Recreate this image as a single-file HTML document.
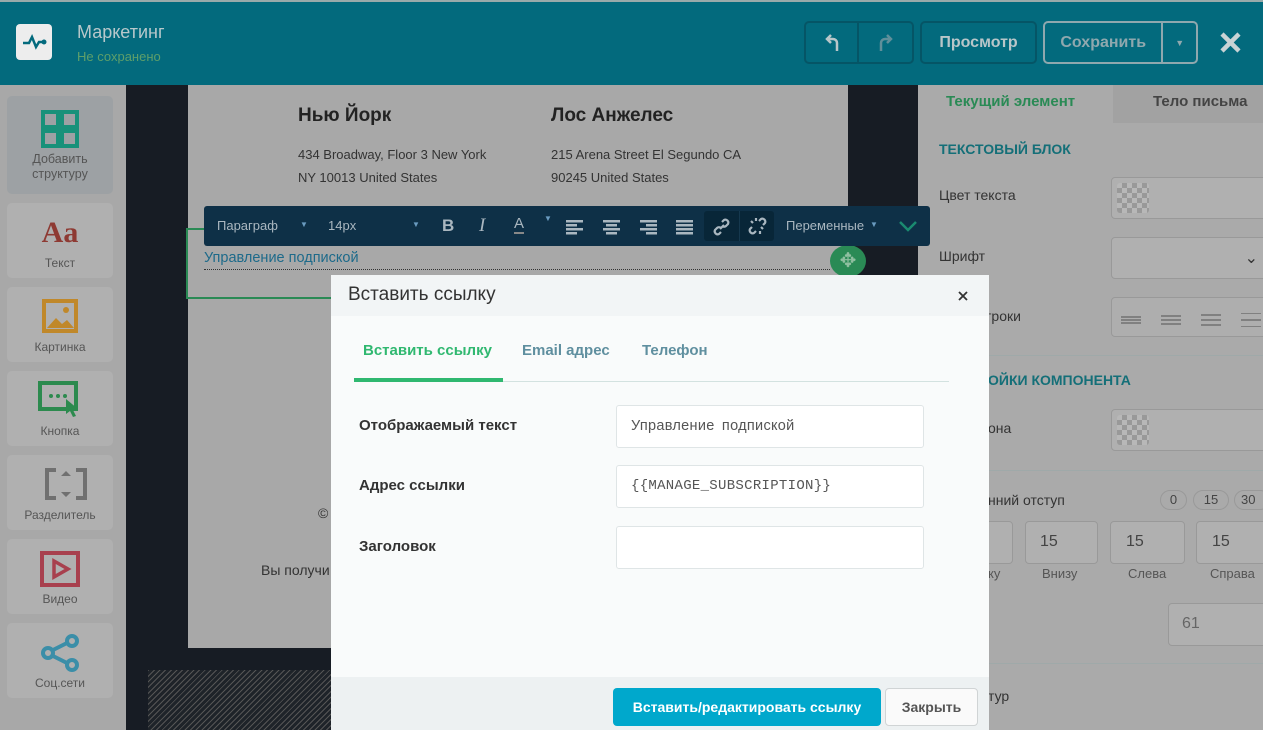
<!DOCTYPE html>
<html><head><meta charset="utf-8"><style>
*{box-sizing:border-box;margin:0;padding:0}
body{width:1263px;height:730px;overflow:hidden;position:relative;font-family:"Liberation Sans","DejaVu Sans",sans-serif;background:#a9a9a9}
.a{position:absolute}
.hdr{left:0;top:0;width:1263px;height:85px;background:#036a7d;border-top:2px solid #9aa}
.btn{position:absolute;top:19px;height:43px;border:2px solid #055566;border-radius:5px;color:#b9c6c9;font-weight:bold;font-size:16px;display:flex;align-items:center;justify-content:center}
.side{left:0;top:85px;width:126px;height:645px;background:#a8a8a8}
.card{position:absolute;left:7px;width:106px;height:75px;background:#b0b0b0;border-radius:5px;text-align:center;font-size:12px;color:#555}
.card span{position:absolute;left:0;right:0;bottom:8px}
.canvas{left:126px;top:85px;width:792px;height:645px;background:#171c24}
.email{left:188px;top:85px;width:660px;height:563px;background:#a8a8a8}
.rp{left:918px;top:85px;width:345px;height:645px;background:#aaaaaa}
.lbl{position:absolute;font-size:14px;color:#333}
.inp{position:absolute;background:#b0b0b0;border:1px solid #999;border-radius:4px}
.tb{left:204px;top:206px;width:726px;height:40px;background:#0e3047;border-radius:3px;color:#aab7c0;font-size:13px;z-index:5}
.modal{left:331px;top:275px;width:658px;height:455px;background:#f9fbfb;z-index:6}
.mi{position:absolute;left:285px;width:308px;height:43px;border:1px solid #dfe5e6;border-radius:3px;background:#fff;font-family:"Liberation Mono",monospace;font-size:14px;color:#555;padding:12px 14px;letter-spacing:.3px}
.ml{position:absolute;left:28px;font-weight:bold;font-size:15px;color:#333}
</style></head><body>
<div class="a hdr">
 <div class="a" style="left:16px;top:22px;width:36px;height:36px;background:#ededed;border-radius:4px"><svg width="36" height="36"><path d="M7 19h6l3-6 4 10 3-5h4" fill="none" stroke="#036a7d" stroke-width="2.5"/><circle cx="28" cy="18" r="2.5" fill="#036a7d"/></svg></div>
 <div class="a" style="left:77px;top:20px;font-size:18px;color:#b8c8cb">Маркетинг</div>
 <div class="a" style="left:77px;top:47px;font-size:13px;color:#5e9f6a">Не сохранено</div>
 <div class="btn" style="left:804px;width:110px"><span style="width:55px;height:100%;border-right:2px solid #055566;display:flex;align-items:center;justify-content:center"><svg width="16" height="18"><path d="M13 17V9a4 4 0 0 0-4-4H3M7 1L3 5l4 4" fill="none" stroke="#b9c6c9" stroke-width="2.5"/></svg></span><span style="width:55px;display:flex;align-items:center;justify-content:center"><svg width="16" height="18"><path d="M3 17V9a4 4 0 0 1 4-4h6M9 1l4 4-4 4" fill="none" stroke="#5f8f9a" stroke-width="2.5"/></svg></span></div>
 <div class="btn" style="left:920px;width:117px">Просмотр</div>
 <div class="btn" style="left:1043px;width:155px;border-color:#8fa8ae;color:#8fa8ae;justify-content:flex-start"><span style="width:120px;text-align:center;border-right:2px solid #8fa8ae;line-height:39px">Сохранить</span><span style="width:33px;text-align:center;font-size:9px">▼</span></div>
 <svg class="a" style="left:1220px;top:30px" width="21" height="21"><path d="M2 2l17 17M19 2L2 19" stroke="#c9d3d5" stroke-width="4.5"/></svg>
</div>
<div class="a side">
 <div class="card" style="top:11px;height:98px;background:#9da1a4"><svg class="a" style="left:34px;top:14px" width="38" height="38"><g fill="none" stroke="#18917a" stroke-width="4"><rect x="2" y="2" width="15" height="15"/><rect x="21" y="2" width="15" height="15"/><rect x="2" y="21" width="15" height="15"/><rect x="21" y="21" width="15" height="15"/></g></svg><span style="bottom:12px;line-height:15px;font-size:12.5px">Добавить<br>структуру</span></div>
 <div class="card" style="top:118px"><div class="a" style="left:0;right:0;top:13px;font-family:'Liberation Serif',serif;font-weight:bold;font-size:30px;color:#8e3a33">Aa</div><span>Текст</span></div>
 <div class="card" style="top:202px"><svg class="a" style="left:35px;top:12px" width="36" height="34"><rect x="2" y="2" width="32" height="30" fill="none" stroke="#c0882a" stroke-width="4"/><path d="M5 29l9-10 6 6 5-4 7 8z" fill="#c0882a"/><circle cx="24" cy="11" r="3" fill="#c0882a"/></svg><span>Картинка</span></div>
 <div class="card" style="top:286px"><svg class="a" style="left:31px;top:10px" width="44" height="38"><rect x="2" y="2" width="36" height="26" fill="none" stroke="#2c8a4e" stroke-width="4"/><circle cx="13" cy="15" r="2" fill="#2c8a4e"/><circle cx="20" cy="15" r="2" fill="#2c8a4e"/><circle cx="27" cy="15" r="2" fill="#2c8a4e"/><path d="M28 18l12 10-5 1 3 6-3 1-3-6-4 3z" fill="#2c8a4e"/></svg><span>Кнопка</span></div>
 <div class="card" style="top:370px"><svg class="a" style="left:37px;top:12px" width="44" height="34"><path d="M12 3H3v28h9M32 3h9v28h-9" fill="none" stroke="#707070" stroke-width="4"/><path d="M22 4l5 5h-10zM22 30l5-5h-10z" fill="#707070"/></svg><span>Разделитель</span></div>
 <div class="card" style="top:454px"><svg class="a" style="left:33px;top:12px" width="40" height="36"><rect x="2" y="2" width="36" height="32" fill="none" stroke="#a8404e" stroke-width="4"/><path d="M14 10l14 8-14 8z" fill="none" stroke="#a8404e" stroke-width="3.5"/></svg><span>Видео</span></div>
 <div class="card" style="top:538px"><svg class="a" style="left:32px;top:10px" width="44" height="40"><g fill="none" stroke="#3b8ea8" stroke-width="4"><circle cx="33" cy="8" r="5"/><circle cx="9" cy="20" r="5"/><circle cx="33" cy="32" r="5"/><path d="M14 17l14-7M14 23l14 7"/></g></svg><span>Соц.сети</span></div>
</div>
<div class="a canvas"></div>
<div class="a email">
 <div class="a" style="left:110px;top:20px;font-weight:bold;font-size:19px;color:#222">Нью Йорк</div>
 <div class="a" style="left:110px;top:58px;font-size:13px;color:#333;line-height:23px">434 Broadway, Floor 3 New York<br>NY 10013 United States</div>
 <div class="a" style="left:363px;top:20px;font-weight:bold;font-size:19px;color:#222">Лос Анжелес</div>
 <div class="a" style="left:363px;top:58px;font-size:13px;color:#333;line-height:23px">215 Arena Street El Segundo CA<br>90245 United States</div>
 <div class="a" style="left:-2px;top:143px;width:660px;height:71px;border:2px solid #2a8a55"></div>
 <div class="a" style="left:16px;top:165px;width:626px;font-size:14.5px;color:#1d6a8a;border-bottom:1px dotted #333;height:20px">Управление подпиской</div>
 <div class="a" style="left:642px;top:160px;width:36px;height:32px;border-radius:50%;background:#2a8a55;color:#8fbfa0;text-align:center;font-size:20px;line-height:32px">✥</div>
 <div class="a" style="left:130px;top:420px;font-size:14px;color:#333">©</div>
 <div class="a" style="left:73px;top:477px;font-size:14px;color:#333">Вы получи</div>
</div>
<div class="a" style="left:148px;top:670px;width:200px;height:60px;background:repeating-linear-gradient(135deg,#555 0 1px,#1e2329 1px 4px)"></div>
<div class="a tb">
 <div class="a" style="left:13px;top:12px">Параграф</div><div class="a" style="left:96px;top:14px;font-size:8px;color:#6a9bc0">▼</div>
 <div class="a" style="left:124px;top:12px">14px</div><div class="a" style="left:208px;top:14px;font-size:8px;color:#6a9bc0">▼</div>
 <div class="a" style="left:238px;top:10px;font-weight:bold;font-size:17px">B</div>
 <div class="a" style="left:275px;top:9px;font-style:italic;font-family:'Liberation Serif',serif;font-size:19px">I</div>
 <div class="a" style="left:310px;top:10px;font-size:15px;border-bottom:2px solid #888;line-height:16px">A</div><div class="a" style="left:340px;top:8px;font-size:8px;color:#6a9bc0">▼</div>
 <svg class="a" style="left:362px;top:13px" width="130" height="16"><g fill="#aab7c0"><rect x="0" y="1" width="17" height="2.5"/><rect x="0" y="5" width="11" height="2.5"/><rect x="0" y="9" width="17" height="2.5"/><rect x="0" y="13" width="11" height="2.5"/><rect x="37" y="1" width="17" height="2.5"/><rect x="40" y="5" width="11" height="2.5"/><rect x="37" y="9" width="17" height="2.5"/><rect x="40" y="13" width="11" height="2.5"/><rect x="74" y="1" width="17" height="2.5"/><rect x="80" y="5" width="11" height="2.5"/><rect x="74" y="9" width="17" height="2.5"/><rect x="80" y="13" width="11" height="2.5"/><rect x="110" y="1" width="17" height="2.5"/><rect x="110" y="5" width="17" height="2.5"/><rect x="110" y="9" width="17" height="2.5"/><rect x="110" y="13" width="17" height="2.5"/></g></svg>
 <div class="a" style="left:500px;top:5px;width:70px;height:30px;background:#082638;border-radius:3px"></div>
 <div class="a" style="left:535px;top:5px;width:1px;height:30px;background:#15384e"></div>
 <svg class="a" style="left:508px;top:11px" width="20" height="20"><g fill="none" stroke="#aab7c0" stroke-width="2.2"><path d="M8 12l4-4"/><path d="M10 5l2-2a3 3 0 0 1 4 4l-2 2a3 3 0 0 1-4 0"/><path d="M9 15l-2 2a3 3 0 0 1-4-4l2-2a3 3 0 0 1 4 0"/></g></svg>
 <svg class="a" style="left:544px;top:10px" width="20" height="20"><g fill="none" stroke="#aab7c0" stroke-width="2.2"><path d="M11 5l2-2a3 3 0 0 1 4 4l-2 2"/><path d="M8 15l-2 2a3 3 0 0 1-4-4l2-2"/><path d="M13 11l2 2M5 7l-2-2M8 2v3M12 15v3"/></g></svg>
 <div class="a" style="left:582px;top:12px">Переменные</div><div class="a" style="left:666px;top:14px;font-size:8px;color:#6a9bc0">▼</div>
 <svg class="a" style="left:695px;top:14px" width="18" height="12"><path d="M1 2l8 8 8-8" fill="none" stroke="#1a8a70" stroke-width="2.5"/></svg>
</div>
<div class="a rp">
 <div class="a" style="left:0;top:0;width:195px;height:38px;font-weight:bold;color:#2a8a55;font-size:15px;padding:8px 28px;white-space:nowrap">Текущий элемент</div>
 <div class="a" style="left:195px;top:0;width:150px;height:38px;background:#a2a2a2;font-weight:bold;color:#444;font-size:15px;padding:8px 0 0 40px;white-space:nowrap">Тело письма</div>
 <div class="a" style="left:21px;top:56px;font-weight:bold;color:#146f78;font-size:14px">ТЕКСТОВЫЙ БЛОК</div>
 <div class="lbl" style="left:21px;top:102px">Цвет текста</div>
 <div class="inp" style="left:193px;top:92px;width:160px;height:42px"><div class="a" style="left:5px;top:5px;width:32px;height:30px;background:repeating-conic-gradient(#999 0 25%,#b8b8b8 0 50%) 0 0/10px 10px;border-radius:3px"></div></div>
 <div class="lbl" style="left:21px;top:163px">Шрифт</div>
 <div class="inp" style="left:193px;top:152px;width:160px;height:42px"><span class="a" style="right:12px;top:10px;color:#333">⌄</span></div>
 <div class="lbl" style="left:60px;top:223px">строки</div>
 <div class="inp" style="left:193px;top:212px;width:160px;height:40px;background:#aeaeae"></div>
 <svg class="a" style="left:203px;top:228px" width="142" height="14"><g stroke="#666" stroke-width="1.3"><path d="M0 4h20M0 7h20M0 10h20"/><path d="M40 3h20M40 7h20M40 11h20"/><path d="M80 2h20M80 7h20M80 12h20"/><path d="M120 0h20M120 7h20M120 14h20"/></g></svg>
 <div class="a" style="left:0;top:270px;width:345px;border-top:1px solid #9fa9a9"></div>
 <div class="a" style="left:70px;top:287px;font-weight:bold;color:#146f78;font-size:14px">ОЙКИ КОМПОНЕНТА</div>
 <div class="lbl" style="left:70px;top:335px">она</div>
 <div class="inp" style="left:193px;top:324px;width:160px;height:42px"><div class="a" style="left:5px;top:5px;width:32px;height:30px;background:repeating-conic-gradient(#999 0 25%,#b8b8b8 0 50%) 0 0/10px 10px;border-radius:3px"></div></div>
 <div class="a" style="left:0;top:385px;width:345px;border-top:1px solid #9fa9a9"></div>
 <div class="lbl" style="left:70px;top:407px;font-size:14px">нний отступ</div>
 <div class="a" style="left:242px;top:405px;width:27px;height:20px;border:1px solid #999;border-radius:10px;font-size:13px;text-align:center;line-height:18px;color:#444">0</div>
 <div class="a" style="left:275px;top:405px;width:36px;height:20px;border:1px solid #999;border-radius:10px;font-size:13px;text-align:center;line-height:18px;color:#444">15</div>
 <div class="a" style="left:316px;top:405px;width:36px;height:20px;border:1px solid #999;border-radius:10px;font-size:13px;text-align:left;padding-left:6px;line-height:18px;color:#444">30</div>
 <div class="inp" style="left:40px;top:436px;width:55px;height:43px"></div>
 <div class="inp" style="left:107px;top:436px;width:73px;height:43px;padding:11px 14px;font-size:16px;color:#444">15</div>
 <div class="inp" style="left:192px;top:436px;width:75px;height:43px;padding:11px 15px;font-size:16px;color:#444">15</div>
 <div class="inp" style="left:278px;top:436px;width:75px;height:43px;padding:11px 15px;font-size:16px;color:#444">15</div>
 <div class="lbl" style="left:70px;top:481px;font-size:13px;color:#555">ку</div>
 <div class="lbl" style="left:124px;top:481px;font-size:13px;color:#555">Внизу</div>
 <div class="lbl" style="left:210px;top:481px;font-size:13px;color:#555">Слева</div>
 <div class="lbl" style="left:292px;top:481px;font-size:13px;color:#555">Справа</div>
 <div class="inp" style="left:250px;top:518px;width:110px;height:43px;padding:11px 13px;font-size:16px;color:#666">61</div>
 <div class="a" style="left:0;top:578px;width:345px;border-top:1px solid #9fa9a9"></div>
 <div class="lbl" style="left:70px;top:603px">тур</div>
</div>
<div class="a modal">
 <div class="a" style="left:0;top:0;width:658px;height:41px;background:#f2f5f6"></div>
 <div class="a" style="left:17px;top:9px;font-size:19px;color:#333">Вставить ссылку</div>
 <svg class="a" style="left:627px;top:16px" width="10" height="10"><path d="M1 1l8 8M9 1L1 9" stroke="#333" stroke-width="1.8"/></svg>
 <div class="a" style="left:32px;top:67px;font-weight:bold;font-size:15px;color:#30b870">Вставить ссылку</div>
 <div class="a" style="left:191px;top:67px;font-weight:bold;font-size:15px;color:#5f8f9f">Email адрес</div>
 <div class="a" style="left:311px;top:67px;font-weight:bold;font-size:15px;color:#5f8f9f">Телефон</div>
 <div class="a" style="left:23px;top:106px;width:595px;border-top:1px solid #d3e2e0"></div>
 <div class="a" style="left:23px;top:103px;width:149px;height:4px;background:#30b870"></div>
 <div class="ml" style="top:142px">Отображаемый текст</div>
 <div class="mi" style="top:130px;font-family:'Liberation Sans',sans-serif;font-size:14.5px;word-spacing:3px">Управление подпиской</div>
 <div class="ml" style="top:202px">Адрес ссылки</div>
 <div class="mi" style="top:190px">{{MANAGE_SUBSCRIPTION}}</div>
 <div class="ml" style="top:263px">Заголовок</div>
 <div class="mi" style="top:251px"></div>
 <div class="a" style="left:0;top:402px;width:658px;height:53px;background:#edf1f2"></div>
 <div class="a" style="left:282px;top:413px;width:268px;height:38px;background:#00a8cc;border-radius:4px;color:#fff;font-weight:bold;font-size:14px;text-align:center;line-height:38px">Вставить/редактировать ссылку</div>
 <div class="a" style="left:554px;top:413px;width:93px;height:38px;background:#fafafa;border:1px solid #d0d4d5;border-radius:4px;color:#555;font-weight:bold;font-size:14px;text-align:center;line-height:36px">Закрыть</div>
</div>
</body></html>
